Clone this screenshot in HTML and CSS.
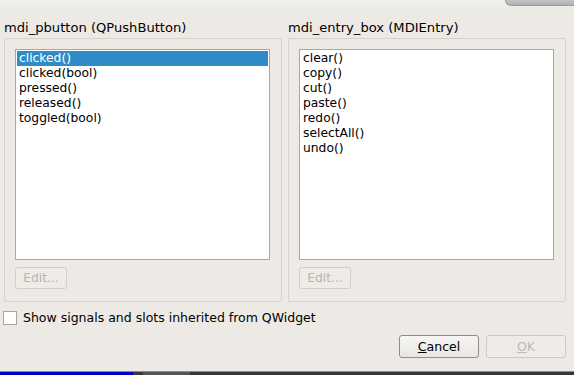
FILE: index.html
```html
<!DOCTYPE html>
<html lang="en">
<head>
    <meta charset="UTF-8">
    <title>Configure Connection</title>
    <link rel="stylesheet" href="styles.css">
</head>
<body>
    <!-- window title strip, cut off at the top -->
    <div class="titlebar">
        <div class="close-tab"></div>
    </div>

    <div class="dialog">
        <div class="columns">
            <div class="side">
                <div class="side-label">mdi_pbutton (QPushButton)</div>
                <div class="group">
                    <ul class="list">
                        <li class="selected">clicked()</li>
                        <li>clicked(bool)</li>
                        <li>pressed()</li>
                        <li>released()</li>
                        <li>toggled(bool)</li>
                    </ul>
                    <button class="edit-button" disabled>Edit...</button>
                </div>
            </div>

            <div class="side">
                <div class="side-label">mdi_entry_box (MDIEntry)</div>
                <div class="group">
                    <ul class="list">
                        <li>clear()</li>
                        <li>copy()</li>
                        <li>cut()</li>
                        <li>paste()</li>
                        <li>redo()</li>
                        <li>selectAll()</li>
                        <li>undo()</li>
                    </ul>
                    <button class="edit-button" disabled>Edit...</button>
                </div>
            </div>
        </div>

        <label class="inherit-row">
            <span class="checkbox"></span>
            Show signals and slots inherited from QWidget
        </label>

        <div class="button-row">
            <button class="push-button"><u>C</u>ancel</button>
            <button class="push-button" disabled><u>O</u>K</button>
        </div>
    </div>

    <!-- taskbar peeking in at the bottom -->
    <div class="taskbar">
        <div class="task active"></div>
        <div class="task gap"></div>
        <div class="task other"></div>
    </div>
</body>
</html>
```

FILE: styles.css
```css
body {
    margin: 0;
    width: 574px;
    height: 375px;
    overflow: hidden;
    font-family: 'DejaVu Sans', sans-serif;
    font-size: 12.5px;
    color: #000;
    background-color: #edeae5;
}

.titlebar {
    height: 7px;
    background-color: #efefee;
    display: flex;
    justify-content: flex-end;
}

.close-tab {
    width: 68px;
    height: 5px;
    background: linear-gradient(#c4c4c4, #b0b0b0);
    border-left: 1px solid #9c9c9c;
    border-bottom: 1px solid #9c9c9c;
    border-bottom-left-radius: 7px;
}

.dialog {
    height: 364px;
    padding: 0 8px 0 4px;
    box-sizing: border-box;
    display: flex;
    flex-direction: column;
}

.columns {
    display: grid;
    grid-template-columns: 278px 278px;
    column-gap: 6px;
}

.side-label {
    height: 31px;
    line-height: 16px;
    padding-top: 13px;
    box-sizing: border-box;
    font-size: 13.1px;
}

.group {
    border: 1px solid #d5d1cc;
    border-radius: 2px;
    padding: 10px 11px 12px 10px;
    height: 264px;
    box-sizing: border-box;
    display: flex;
    flex-direction: column;
}

.list {
    list-style: none;
    margin: 0;
    padding: 1px;
    height: 213px;
    box-sizing: border-box;
    background-color: #fff;
    border: 1px solid #aaa8a5;
    font-size: 12.3px;
}

.list li {
    height: 15px;
    line-height: 15px;
    padding-left: 2px;
}

.list li.selected {
    background-color: #308cc6;
    color: #fff;
}

.edit-button {
    margin-top: 7px;
    width: 52px;
    height: 22px;
    font-family: inherit;
    font-size: 12.3px;
    color: #b8b4b0;
    background-color: #efece8;
    border: 1px solid #d2cec9;
    border-radius: 3px;
    padding: 0;
}

.inherit-row {
    margin-top: 8px;
    display: flex;
    align-items: center;
    gap: 6px;
    height: 15px;
    margin-left: -1px;
}

.checkbox {
    width: 12px;
    height: 12px;
    background-color: #fff;
    border: 1px solid #a8a5a1;
}

.button-row {
    margin-top: 10px;
    display: flex;
    justify-content: flex-end;
    gap: 7px;
}

.push-button {
    width: 80px;
    height: 23px;
    font-family: inherit;
    font-size: 12.5px;
    color: #000;
    background: linear-gradient(#f7f6f4, #e9e6e2);
    border: 1px solid #918d89;
    border-radius: 3px;
    padding: 0;
}

.push-button:disabled {
    color: #bdb9b5;
    background: #efece8;
    border-color: #cdc9c4;
}

.taskbar {
    height: 4px;
    border-top: 1px solid #8c8c8c;
    display: flex;
    background-color: #373737;
}

.task.active {
    width: 133px;
    background-color: #0000c4;
}

.task.gap {
    width: 10px;
}

.task.other {
    width: 47px;
    background-color: #555;
}
```
